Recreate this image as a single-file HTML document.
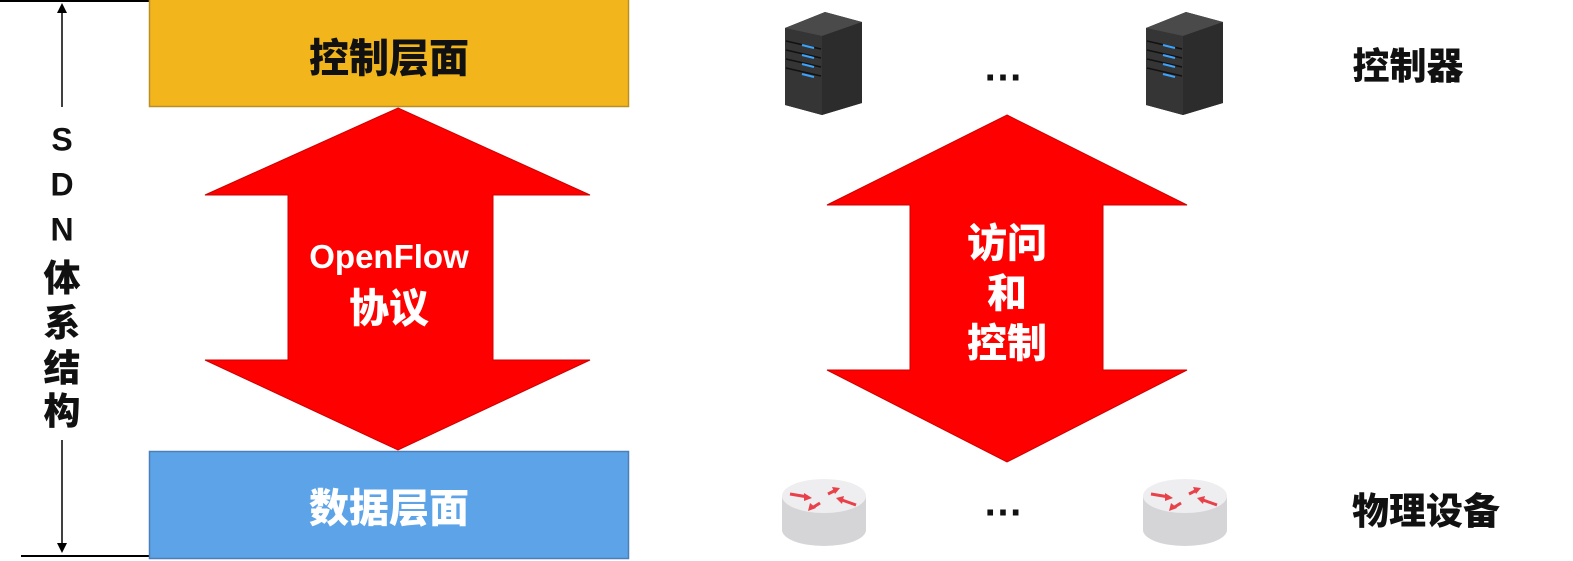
<!DOCTYPE html>
<html><head><meta charset="utf-8"><style>
body{margin:0;width:1573px;height:561px;background:#fff;position:relative;overflow:hidden;font-family:"Liberation Sans","Noto Sans CJK SC",sans-serif;font-weight:900}
.t{position:absolute;transform:translate(-50%,-50%);white-space:nowrap}
</style></head><body>
<svg width="1573" height="561" style="position:absolute;left:0;top:0">
<line x1="0" y1="1" x2="150" y2="1" stroke="#000" stroke-width="2"/>
<line x1="21" y1="556" x2="170" y2="556" stroke="#000" stroke-width="2"/>
<line x1="62" y1="8" x2="62" y2="107" stroke="#000" stroke-width="1.5"/>
<polygon points="57,13 67,13 62,3" fill="#000"/>
<line x1="62" y1="440" x2="62" y2="548" stroke="#000" stroke-width="1.5"/>
<polygon points="57,543 67,543 62,553" fill="#000"/>
<rect x="149.5" y="-1" width="479" height="107.5" fill="#f2b61c" stroke="#b89022" stroke-width="1.5"/>
<rect x="149.5" y="451.5" width="479" height="107" fill="#5ca3e8" stroke="#4a7fb8" stroke-width="1.5"/>
<polygon points="398,108 590,195 493,195 493,360 590,360 398,450 205,360 288,360 288,195 205,195" fill="#f00" stroke="#c00" stroke-width="1"/>
<polygon points="1007,115 1187,205 1103,205 1103,370 1187,370 1007,462 827,370 910,370 910,205 827,205" fill="#f00" stroke="#c00" stroke-width="1"/>
<g id="srv">
<polygon points="785,28 825,12 862,22 862,103 822,115 785,105" fill="#3a3a3a"/>
<polygon points="785,28 825,12 862,22 822,36" fill="#4a4a4a"/>
<polygon points="822,36 862,22 862,103 822,115" fill="#2c2c2c"/>
<polygon points="785,28 822,36 822,115 785,105" fill="#353535"/>
<g stroke="#111" stroke-width="1.5"><line x1="786" y1="41" x2="821" y2="49"/><line x1="786" y1="50" x2="821" y2="58"/><line x1="786" y1="59" x2="821" y2="67"/><line x1="786" y1="68" x2="821" y2="76"/></g>
<g stroke="#3aa4ff" stroke-width="2"><line x1="802" y1="45" x2="814" y2="48"/><line x1="802" y1="55" x2="814" y2="58"/><line x1="802" y1="64" x2="814" y2="67"/><line x1="802" y1="74" x2="814" y2="77"/></g>
</g>
<use href="#srv" x="361" y="0"/>
<g id="rt">
<path d="M782,496 L782,530 A42,16 0 0 0 866,530 L866,496 Z" fill="#d5d5d8"/>
<ellipse cx="824" cy="496" rx="42" ry="17" fill="#eeeef0"/>
<g stroke="#e8414a" stroke-width="3" fill="#e8414a">
<line x1="790" y1="494" x2="808" y2="497"/><polygon points="812,498 804,493 804,501" stroke="none"/>
<line x1="842" y1="500" x2="856" y2="505"/><polygon points="836,498 844,496 842,504" stroke="none"/>
<line x1="828" y1="494" x2="836" y2="490"/><polygon points="840,488 832,487 835,494" stroke="none"/>
<line x1="820" y1="503" x2="812" y2="508"/><polygon points="808,511 810,503 816,508" stroke="none"/>
</g>
</g>
<use href="#rt" x="361" y="0"/>
</svg>
<div class="t" style="left:389px;top:55px;font-size:40px;color:#111">控制层面</div>
<div class="t" style="left:389px;top:505px;font-size:40px;color:#fff">数据层面</div>
<div class="t" style="left:389px;top:257px;font-size:33px;color:#fff">OpenFlow</div>
<div class="t" style="left:389px;top:305px;font-size:40px;color:#fff">协议</div>
<div class="t" style="left:1007px;top:240px;font-size:40px;color:#fff">访问</div>
<div class="t" style="left:1007px;top:290px;font-size:40px;color:#fff">和</div>
<div class="t" style="left:1007px;top:340px;font-size:40px;color:#fff">控制</div>
<div class="t" style="left:1408px;top:63px;font-size:37px;color:#111">控制器</div>
<div class="t" style="left:1426px;top:508px;font-size:37px;color:#111">物理设备</div>
<div class="t" style="left:1003px;top:68px;font-size:40px;color:#111">…</div>
<div class="t" style="left:1003px;top:503px;font-size:40px;color:#111">…</div>
<div class="t" style="left:62px;top:140px;font-size:32px;color:#111">S</div>
<div class="t" style="left:62px;top:185px;font-size:32px;color:#111">D</div>
<div class="t" style="left:62px;top:230px;font-size:32px;color:#111">N</div>
<div class="t" style="left:62px;top:275px;font-size:37px;color:#111">体</div>
<div class="t" style="left:62px;top:320px;font-size:37px;color:#111">系</div>
<div class="t" style="left:62px;top:365px;font-size:37px;color:#111">结</div>
<div class="t" style="left:62px;top:408px;font-size:37px;color:#111">构</div>
</body></html>
